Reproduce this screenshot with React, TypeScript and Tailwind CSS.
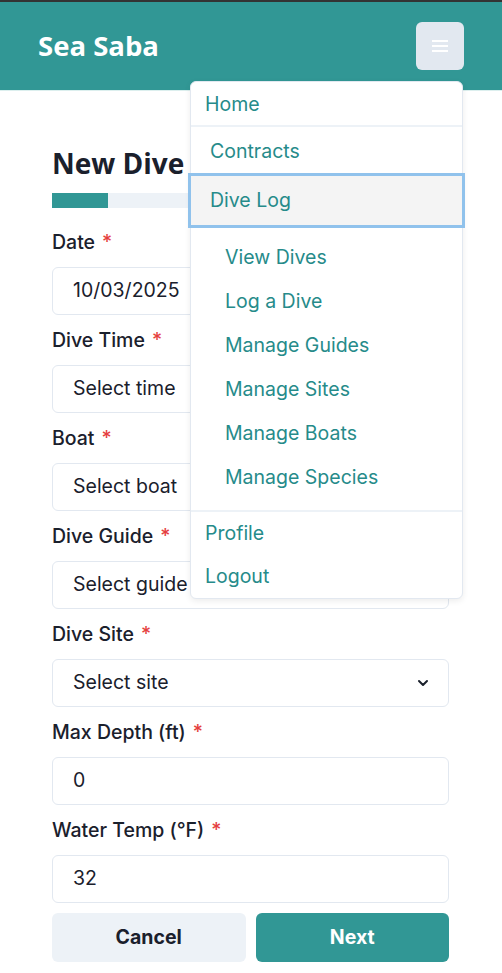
import { ChevronDown } from "lucide-react"

const FIELDS = [
  { label: "Date", value: "10/03/2025", select: false },
  { label: "Dive Time", value: "Select time", select: true },
  { label: "Boat", value: "Select boat", select: true },
  { label: "Dive Guide", value: "Select guide", select: true },
  { label: "Dive Site", value: "Select site", select: true },
  { label: "Max Depth (ft)", value: "0", select: false },
  { label: "Water Temp (°F)", value: "32", select: false },
]

const SUB_ITEMS = ["View Dives", "Log a Dive", "Manage Guides", "Manage Sites", "Manage Boats", "Manage Species"]

function NavMenu() {
  return (
    <div className="absolute left-[190px] top-[79px] z-20 w-[273px] rounded-md border border-[#e2e8f0] bg-white text-[19.5px] text-[#268b8a] shadow-[0_2px_6px_rgba(0,0,0,0.08)]">
      <div className="flex h-[45px] items-center border-b-2 border-[#edf2f7] pl-[14px] pt-[2px]">Home</div>
      <div className="flex h-[49px] items-center pl-[19px]">Contracts</div>
      <div className="flex h-[49px] items-center bg-[#f4f4f4] pl-[19px] outline-[3px] outline-solid outline-[#90c2ec]">
        Dive Log
      </div>
      <div className="pt-[11px] pb-[10px]">
        {SUB_ITEMS.map((s) => (
          <div key={s} className="flex h-[44px] items-center pl-[34px]">
            {s}
          </div>
        ))}
      </div>
      <div className="border-t-2 border-[#edf2f7]">
        <div className="flex h-[44px] items-center pl-[14px]">Profile</div>
        <div className="flex h-[42px] items-center pl-[14px]">Logout</div>
      </div>
    </div>
  )
}

export default function App() {
  return (
    <div className="min-h-screen bg-white font-['Inter',sans-serif] text-[#1a202c]">
      <div className="h-[2px] bg-[#333333]" />
      <header className="relative flex h-[89px] items-center justify-between border-b border-[#dcefee] bg-[#319795] px-[38px]">
        <h1 className="font-['Open_Sans',sans-serif] text-[27.5px] font-bold text-white">Sea Saba</h1>
        <button className="flex h-[48px] w-[48px] flex-col items-center justify-center gap-[3px] rounded-md bg-[#e2e8f0]">
          <span className="h-[2px] w-[16px] bg-white" />
          <span className="h-[2px] w-[16px] bg-white" />
          <span className="h-[2px] w-[16px] bg-white" />
        </button>
        <NavMenu />
      </header>

      <main className="pl-[52px] pr-[53px] pt-[54px]">
        <h2 className="font-['Open_Sans',sans-serif] text-[28px] font-bold leading-[36px]">New Dive</h2>
        <div className="mt-[12px] h-[15px] bg-[#edf2f7]">
          <div className="h-full w-[56px] bg-[#319795]" />
        </div>

        <div className="mt-[9px] flex flex-col">
          {FIELDS.map((f) => (
            <div key={f.label}>
              <div className="flex h-[50px] items-center pt-[1px] text-[19.5px] font-medium">
                {f.label}
                <span className="ml-[7px] text-[#e53e3e]">*</span>
              </div>
              <div className="relative flex h-[48px] items-center rounded-md border border-[#e2e8f0] pl-[20px] text-[19.5px]">
                {f.value}
                {f.select && (
                  <ChevronDown className="absolute right-[17px] h-4 w-4 text-[#1a202c]" strokeWidth={3} />
                )}
              </div>
            </div>
          ))}
        </div>

        <div className="mt-[10px] grid grid-cols-2 gap-[10px]">
          <button className="h-[49px] rounded-md bg-[#edf2f7] text-[19.5px] font-bold text-[#1a202c]">Cancel</button>
          <button className="h-[49px] rounded-md bg-[#319795] text-[19.5px] font-bold text-white">Next</button>
        </div>
      </main>
    </div>
  )
}
